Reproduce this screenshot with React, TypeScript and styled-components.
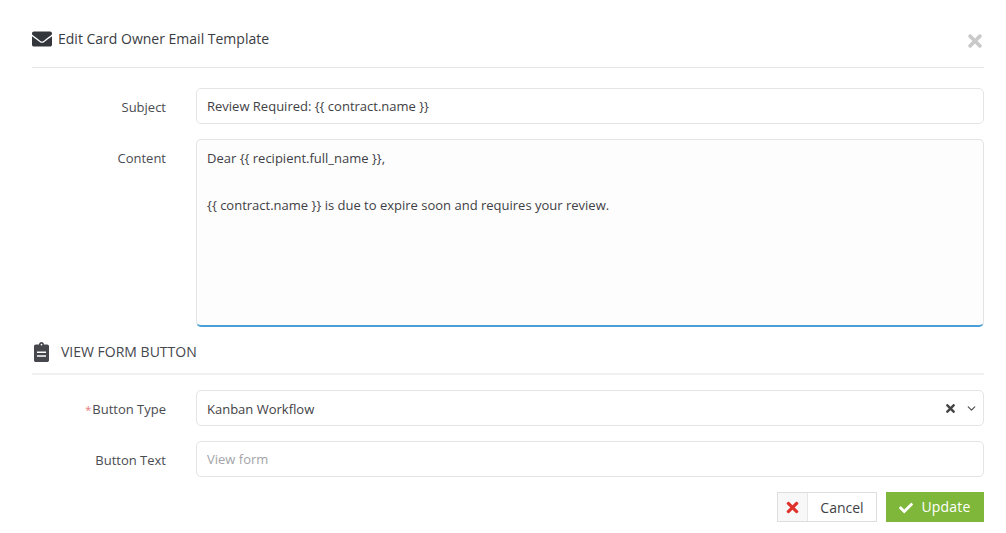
import React from 'react';
import styled, { createGlobalStyle } from 'styled-components';
import { FaEnvelope, FaTimes, FaCheck } from 'react-icons/fa';
import { ChevronDown } from 'lucide-react';

const GlobalStyle = createGlobalStyle`
  html, body {
    margin: 0;
    padding: 0;
    background: #ffffff;
    font-family: "Open Sans", "Liberation Sans", sans-serif;
    font-size: 13px;
    color: #3f3f46;
  }
  * { box-sizing: border-box; }
`;

function ClipboardIcon() {
  return (
    <svg width="15" height="20" viewBox="0 0 15 20">
      <path
        fill="#45474d"
        fillRule="evenodd"
        d="M5 2.6C5 1.2 6.1 0 7.5 0S10 1.2 10 2.6h3.2c1 0 1.8.8 1.8 1.8v13.8c0 1-.8 1.8-1.8 1.8H1.8c-1 0-1.8-.8-1.8-1.8V4.4c0-1 .8-1.8 1.8-1.8H5zM6.6 2.6a.9.9 0 1 0 1.8 0 .9.9 0 0 0-1.8 0zM3 9.6v1.5h9V9.6H3zM3 13.2v1.5h9v-1.5H3z"
      />
    </svg>
  );
}

function App() {
  return (
    <Page>
      <GlobalStyle />
      <Header>
        <Title>
          <FaEnvelope size={20} color="#33363a" />
          Edit Card Owner Email Template
        </Title>
        <Close><FaTimes size={20} /></Close>
      </Header>

      <Row>
        <Label>Subject</Label>
        <TextInput readOnly value="Review Required: {{ contract.name }}" />
      </Row>
      <Row $flush>
        <Label>Content</Label>
        <TextArea
          readOnly
          value={'Dear {{ recipient.full_name }},\n\n{{ contract.name }} is due to expire soon and requires your review.'}
        />
      </Row>

      <Section>
        <ClipboardIcon />
        VIEW FORM BUTTON
      </Section>

      <Row>
        <Label><Required>*</Required>Button Type</Label>
        <SelectBox>
          Kanban Workflow
          <SelectIcons>
            <FaTimes size={13} color="#444" />
            <ChevronDown size={13} color="#555" strokeWidth={2.4} />
          </SelectIcons>
        </SelectBox>
      </Row>
      <Row>
        <Label>Button Text</Label>
        <TextInput readOnly placeholder="View form" />
      </Row>

      <Actions>
        <CancelButton>
          <CancelIcon><FaTimes size={17} color="#e0322d" /></CancelIcon>
          <CancelText>Cancel</CancelText>
        </CancelButton>
        <UpdateButton>
          <CheckMark><FaCheck size={14} /></CheckMark>
          <span>Update</span>
        </UpdateButton>
      </Actions>
    </Page>
  );
}

export default App;

const Page = styled.div`
  width: 1006px;
  height: 533px;
  padding: 11px 22px 0 32px;
  overflow: hidden;
`;

const Header = styled.div`
  display: flex;
  justify-content: space-between;
  align-items: flex-start;
  height: 57px;
  border-bottom: 1px solid #e6e6e6;
  margin-bottom: 20px;
`;

const Title = styled.div`
  display: flex;
  align-items: center;
  gap: 6px;
  height: 55px;
  font-size: 14px;
  color: #3a3d42;
`;

const Close = styled.div`
  display: flex;
  margin-top: 20px;
  margin-right: -1px;
  color: #c9c9c9;
`;

const Row = styled.div<{ $flush?: boolean }>`
  display: grid;
  grid-template-columns: 134px 1fr;
  column-gap: 30px;
  margin-bottom: ${(p) => (p.$flush ? '0' : '15px')};
`;

const Label = styled.div`
  height: 36px;
  text-align: right;
  line-height: 38px;
  color: #4a4c52;
`;

const Required = styled.span`
  color: #e8787c;
  font-size: 11px;
  margin-right: 1px;
`;

const TextInput = styled.input`
  height: 36px;
  width: 100%;
  padding: 0 10px;
  border: 1px solid #e4e4e4;
  border-radius: 5px;
  background: #fff;
  outline: none;
  font: inherit;
  color: #3f3f46;
  &::placeholder { color: #a4a4a8; }
`;

const TextArea = styled.textarea`
  display: block;
  height: 188px;
  width: 100%;
  padding: 7px 10px;
  border: 1px solid #e4e4e4;
  border-bottom: 2px solid #4a9fd8;
  border-radius: 5px;
  background: #fdfdfd;
  outline: none;
  resize: none;
  font: inherit;
  line-height: 23.5px;
  color: #3f3f46;
`;

const Section = styled.div`
  display: flex;
  align-items: center;
  gap: 12px;
  height: 48px;
  padding: 3px 0 0 2px;
  margin-bottom: 15px;
  border-bottom: 2px solid #f0f0f0;
  font-size: 14px;
  color: #45474d;
`;

const SelectBox = styled.div`
  display: flex;
  align-items: center;
  justify-content: space-between;
  height: 36px;
  padding: 1px 5px 0 10px;
  border: 1px solid #e4e4e4;
  border-radius: 5px;
  color: #3f3f46;
`;

const SelectIcons = styled.span`
  display: flex;
  align-items: center;
  gap: 8px;
`;

const Actions = styled.div`
  display: flex;
  justify-content: flex-end;
  gap: 9px;
`;

const CancelButton = styled.button`
  display: flex;
  align-items: stretch;
  height: 30px;
  width: 100px;
  padding: 0;
  border: 1px solid #dedede;
  background: #fff;
  font: inherit;
  font-size: 14px;
  color: #3f3f46;
`;

const CancelIcon = styled.span`
  display: flex;
  align-items: center;
  justify-content: center;
  width: 30px;
  background: #f8f8f8;
  border-right: 1px solid #e6e6e6;
`;

const CancelText = styled.span`
  flex: 1;
  line-height: 29px;
  text-align: center;
`;

const UpdateButton = styled.button`
  display: flex;
  align-items: center;
  justify-content: center;
  gap: 8px;
  height: 30px;
  width: 98px;
  padding: 0 0 2px;
  border: none;
  background: #7eb739;
  color: #fff;
  font: inherit;
  font-size: 14px;
  letter-spacing: 0.2px;
`;

const CheckMark = styled.span`
  display: flex;
  margin-top: 3px;
`;
